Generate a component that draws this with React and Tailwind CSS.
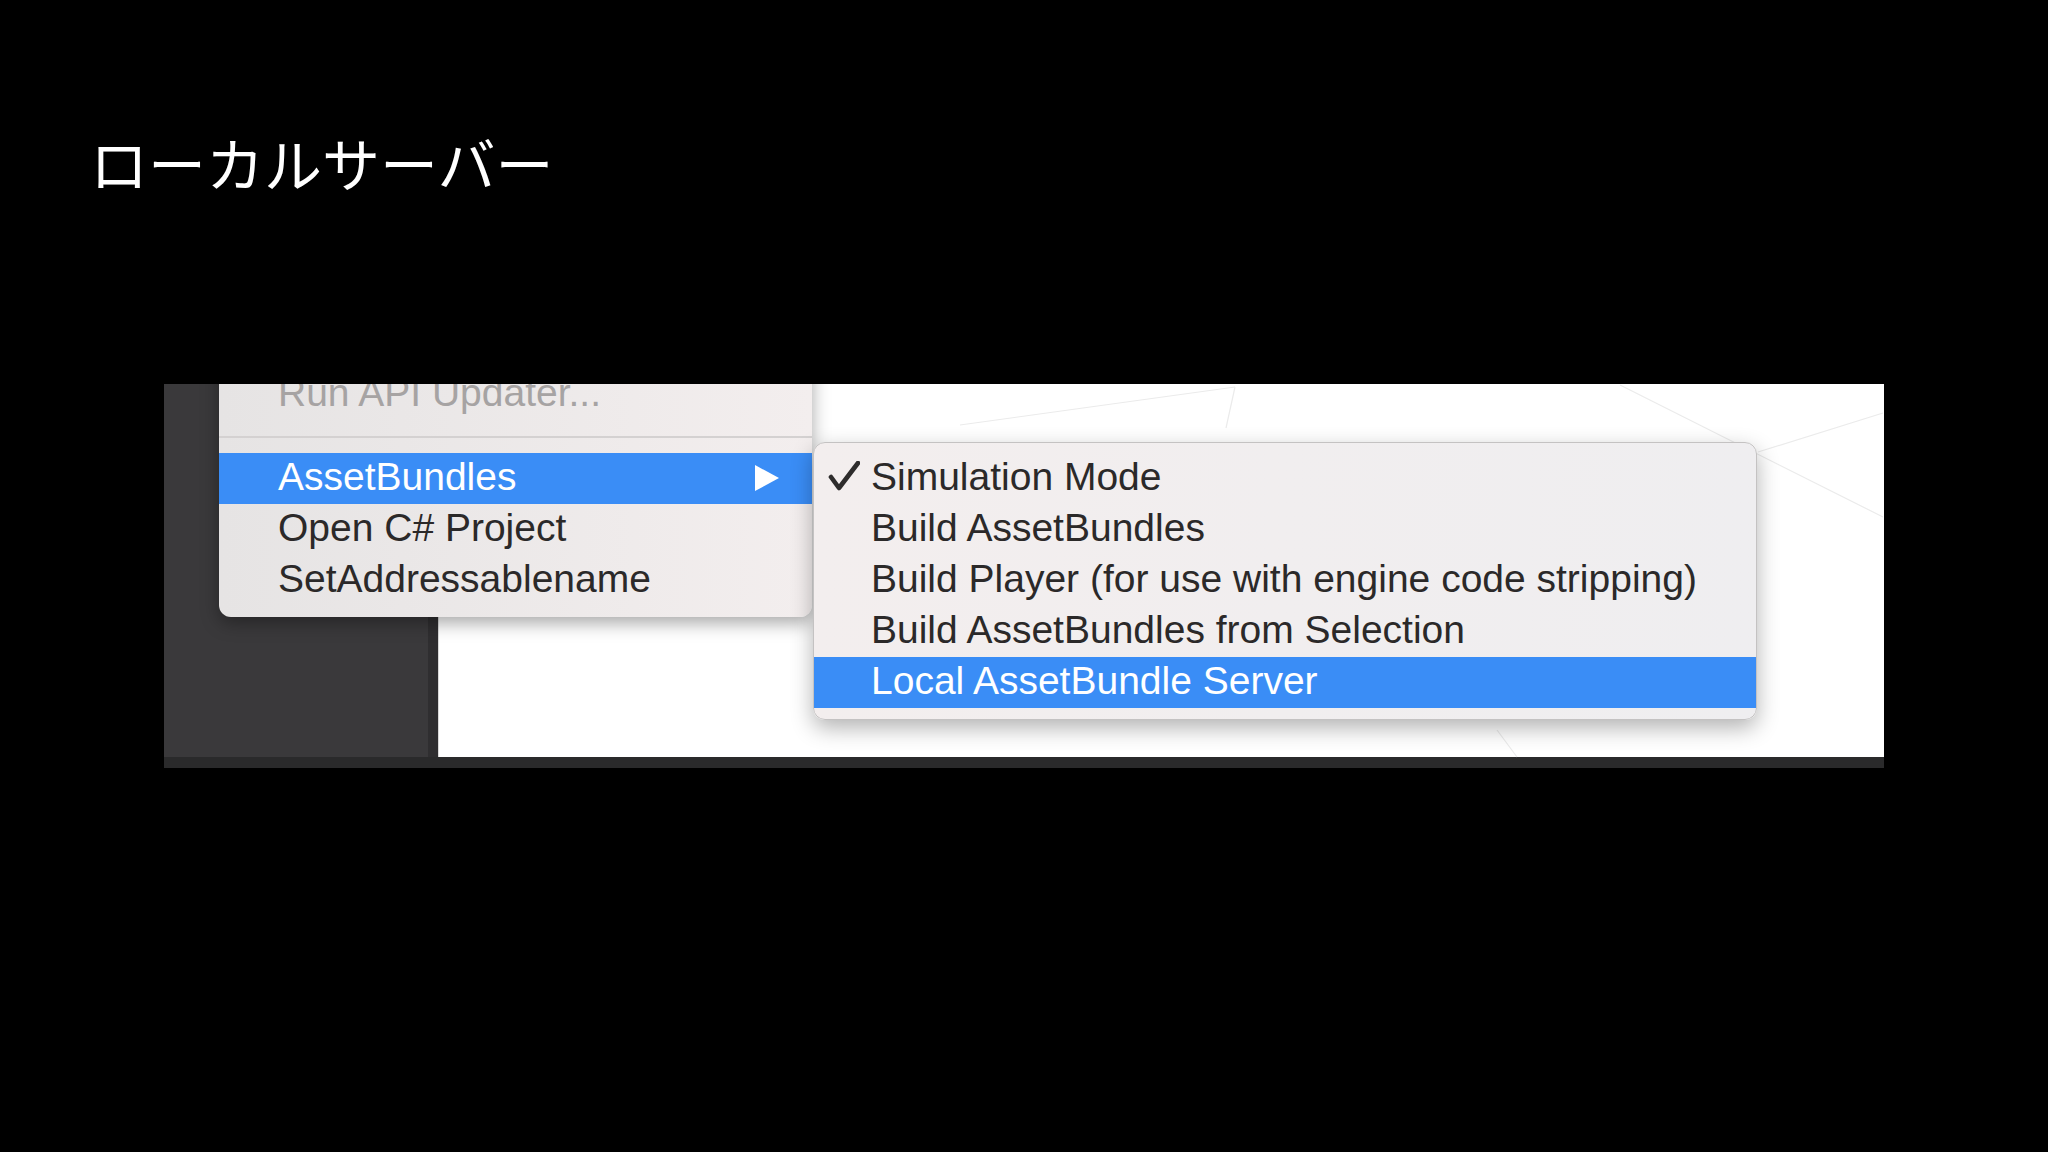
import React from "react";

const sans = { fontFamily: '"Liberation Sans", Arial, sans-serif' };

function Check() {
  return (
    <svg width="32" height="30" viewBox="0 0 32 30" className="block">
      <path d="M3 16 L11 27 L30 2" fill="none" stroke="#2e2c2c" strokeWidth="4.6" strokeLinecap="round" strokeLinejoin="round" />
    </svg>
  );
}

export default function App() {
  const subItems = [
    { label: "Simulation Mode", checked: true },
    { label: "Build AssetBundles" },
    { label: "Build Player (for use with engine code stripping)" },
    { label: "Build AssetBundles from Selection" },
    { label: "Local AssetBundle Server", active: true },
  ];
  return (
    <div className="w-[2048px] h-[1152px] bg-black overflow-hidden flex flex-col">
      <div
        className="ml-[90px] mt-[133px] text-white text-[58px] leading-[58px] h-[58px]"
        style={{ fontFamily: '"Noto Sans CJK JP", "Noto Sans", sans-serif' }}
      >
        ローカルサーバー
      </div>

      <div className="ml-[164px] mt-[193px] w-[1720px] h-[384px] relative overflow-hidden flex flex-col" style={sans}>
        <div className="flex h-[373px]">
          <div className="w-[264px] bg-[#3a393b]" />
          <div className="w-[10px] bg-[#2f2e30]" />
          <div className="flex-1 bg-white border-l border-[#d8d8d8]" />
        </div>
        <div className="h-[11px] bg-[#2a2a2b]" />

        <svg className="absolute inset-0 pointer-events-none" width="1720" height="384" viewBox="0 0 1720 384">
          <g stroke="#ebebeb" strokeWidth="1.2" fill="none">
            <line x1="1456" y1="1" x2="1719" y2="133" />
            <line x1="1594" y1="68" x2="1719" y2="29" />
            <line x1="796" y1="41" x2="1071" y2="3" />
            <line x1="1071" y1="3" x2="1062" y2="44" />
            <line x1="1333" y1="346" x2="1353" y2="373" />
          </g>
        </svg>

        {/* Main menu */}
        <div className="absolute left-[55px] top-[-30px] w-[593px] rounded-b-[12px] bg-gradient-to-r from-[#e6e4e4] to-[#f3eeee] shadow-[0_6px_18px_rgba(0,0,0,0.35)] pt-[12px] pb-[11px]">
          <div className="h-[51px] leading-[47px] pt-[3px] pl-[59px] text-[39px] text-[#a6a3a3] whitespace-nowrap">Run API Updater...</div>
          <div className="h-[36px] flex flex-col">
            <div className="mt-[19px] h-[2px] bg-[#d4d1d1]" />
          </div>
          <div className="h-[51px] leading-[47px] pl-[59px] text-[39px] text-white bg-[#3a8df6] relative whitespace-nowrap">
            AssetBundles
            <svg className="absolute left-[536px] top-[12px]" width="24" height="26" viewBox="0 0 24 26">
              <polygon points="0,0 0,26 24,13" fill="#ffffff" />
            </svg>
          </div>
          <div className="h-[51px] leading-[47px] pl-[59px] text-[39px] text-[#2b2929] whitespace-nowrap">Open C# Project</div>
          <div className="h-[51px] leading-[47px] pl-[59px] text-[39px] text-[#2b2929] whitespace-nowrap">SetAddressablename</div>
        </div>

        {/* Submenu */}
        <div className="absolute left-[649px] top-[58px] w-[944px] h-[278px] rounded-[12px] bg-gradient-to-r from-[#f3eeee] to-[#efeef0] border border-[#c4c2c2] shadow-[0_8px_22px_rgba(0,0,0,0.3)] pt-[10px] overflow-hidden">
          {subItems.map((it) => (
            <div
              key={it.label}
              className={
                "h-[51px] flex items-start text-[39px] leading-[47px] whitespace-nowrap " +
                (it.active ? "bg-[#3a8df6] text-white" : "text-[#2b2929]")
              }
            >
              <div className="w-[57px] h-[51px] flex items-start pl-[14px] pt-[8px]">
                {it.checked ? <Check /> : null}
              </div>
              <div>{it.label}</div>
            </div>
          ))}
        </div>
      </div>
    </div>
  );
}
